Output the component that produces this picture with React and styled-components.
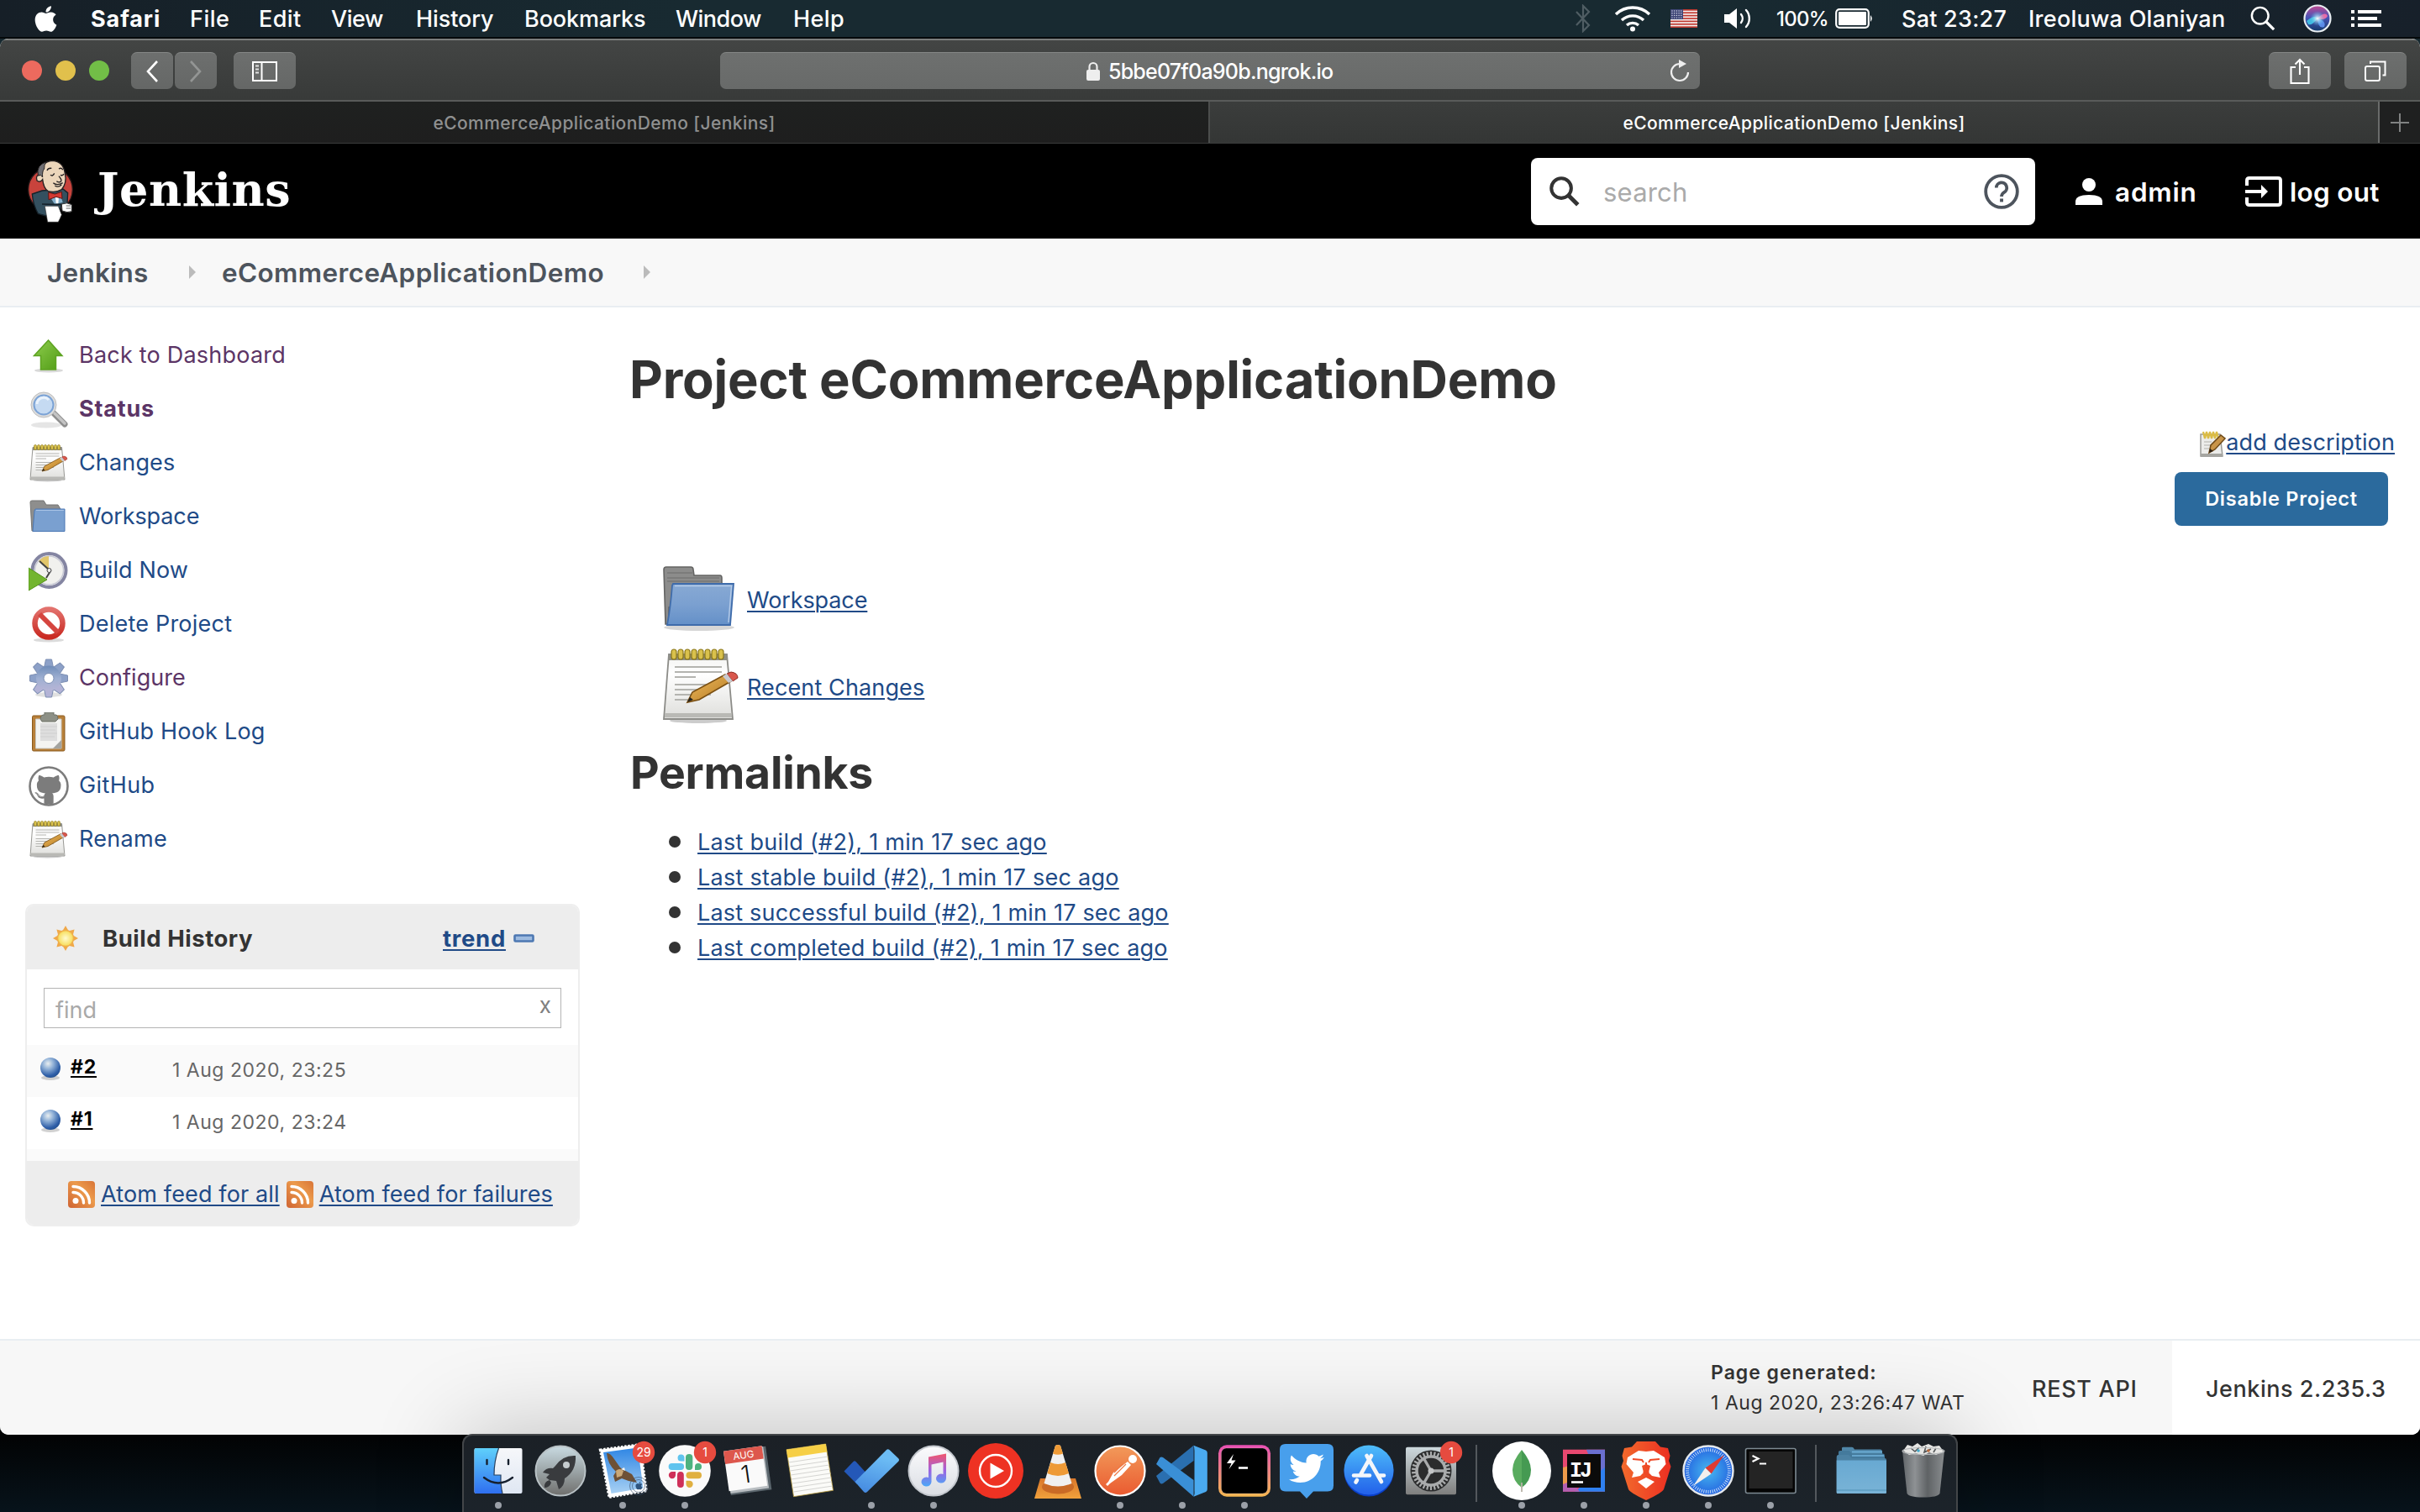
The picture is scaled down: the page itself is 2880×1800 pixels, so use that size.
import React from "react";
import styled, { createGlobalStyle, css } from "styled-components";
import { FaApple, FaTwitter, FaGithub } from "react-icons/fa";

const sans = `Inter, "Noto Sans", "Liberation Sans", sans-serif`;

const GlobalStyle = createGlobalStyle`
  *, *::before, *::after { box-sizing: border-box; }
  html, body { margin: 0; padding: 0; background: #070b0e; }
  body { font-family: ${sans}; font-size: 27px; color: #333; overflow: hidden; }
`;

/* ---------- shell ---------- */
const Desktop = styled.div`
  width: 2880px; height: 1800px; display: flex; flex-direction: column; overflow: hidden;
  background: linear-gradient(#182a31 0, #0a1216 1400px, #020304 1710px, #07131b 1800px);
`;
const MenuBar = styled.header`
  height: 46px; flex: none; display: flex; align-items: center; padding: 0 44px 0 37px; color: #fff;
  background: linear-gradient(90deg, #161f27 0, #182a31 28%, #182a31 70%, #17202a 100%);
  border-bottom: 2px solid #05090b;
`;
const MenuText = styled.span`
  flex: none; width: ${(p) => p.$w}px; font-size: ${(p) => p.$size || 27}px; font-weight: ${(p) => p.$weight || 500};
  letter-spacing: ${(p) => p.$ls || 0}px; white-space: nowrap; line-height: 44px; padding-top: 1px;
`;
const MenuIcon = styled.span`
  flex: none; width: ${(p) => p.$w}px; height: 44px; display: flex; align-items: center;
  svg { display: block; }
`;
const Push = styled.div` flex: 1; `;

const Window = styled.section`
  flex: none; height: 1662px; display: flex; flex-direction: column; background: #fff;
  border-radius: 10px; overflow: hidden;
`;
const Toolbar = styled.div`
  height: 75px; flex: none; display: flex; align-items: center; padding: 1px 16px 0 26px;
  background: linear-gradient(#434544, #383a39); border-top: 2px solid #7b7d7c; border-bottom: 2px solid #595b5a;
`;
const Light = styled.span`
  width: 24px; height: 24px; margin-right: 16px; border-radius: 50%; background: ${(p) => p.$color};
`;
const ToolButton = styled.span`
  width: ${(p) => p.$w}px; height: 44px; margin-left: ${(p) => p.$ml || 0}px; border-radius: 7px;
  display: flex; align-items: center; justify-content: center;
  background: linear-gradient(#6d6f6e, #656766); border-top: 1px solid #858786;
`;
const Address = styled.div`
  width: 1166px; height: 44px; margin-left: 505px; border-radius: 7px; display: flex; align-items: center;
  padding-left: 434px; padding-right: 12px; color: #fff; font-size: 25px; font-weight: 500;
  letter-spacing: ${(p) => p.$ls}px;
  background: linear-gradient(#6e706f, #686a69); border-top: 1px solid #858786;
  > span { flex: 1; padding: 1px 0 0 8px; white-space: nowrap; }
`;
const Tabs = styled.div` height: 50px; flex: none; display: flex; border-bottom: 1px solid #3a3b3b; `;
const Tab = styled.div`
  width: ${(p) => p.$w}px; display: flex; align-items: center; justify-content: center; padding-top: 2px;
  font-size: 21px; font-weight: 500; letter-spacing: ${(p) => p.$ls}px; white-space: nowrap;
  color: ${(p) => (p.$on ? "#fff" : "#8f9090")};
  background: ${(p) => (p.$on ? "linear-gradient(#3b3d3c,#343635)" : "linear-gradient(#1f2120,#1e1e1e)")};
  border-right: 2px solid ${(p) => (p.$on ? "#6a6c6b" : "#4c4e4d")};
`;
const NewTab = styled.div` flex: 1; background: #1f2020; display: flex; align-items: center; justify-content: center; `;

/* ---------- Jenkins header ---------- */
const Header = styled.div`
  height: 113px; flex: none; background: #000; display: flex; align-items: center; padding: 0 45px 0 32px;
`;
const Brand = styled.span`
  margin-left: 27px; margin-top: -4px; color: #fff; font-family: "DejaVu Serif", serif; font-weight: 700;
  font-size: 54px; letter-spacing: ${(p) => p.$ls}px; line-height: 80px; white-space: nowrap;
`;
const SearchBox = styled.div`
  width: 600px; height: 80px; border-radius: 8px; background: #fff; display: flex; align-items: center;
  padding: 0 19px 0 22px; color: #aaa; font-size: 31px; letter-spacing: ${(p) => p.$ls}px;
  > span { flex: 1; padding: 1px 0 0 28px; }
`;
const HeaderLink = styled.span`
  display: flex; align-items: center; width: ${(p) => p.$w}px; margin-left: ${(p) => p.$ml}px; gap: ${(p) => p.$gap}px;
  color: #fff; font-size: 31.5px; font-weight: 600; letter-spacing: ${(p) => p.$ls}px; white-space: nowrap; padding-top: 1px;
  svg { flex: none; }
`;
const Crumbs = styled.nav`
  height: 82px; flex: none; display: flex; align-items: center; padding: 0 0 0 56px; background: #f8f8f8;
  border-bottom: 2px solid #e9eef2; color: #4d545d; font-size: 31.5px; font-weight: 600;
`;
const Crumb = styled.span` width: ${(p) => p.$w}px; letter-spacing: ${(p) => p.$ls}px; white-space: nowrap; `;
const CrumbArrow = styled.span`
  width: 39px; height: 16px; display: flex;
  &::before { content: ""; border-left: 8px solid #bbb; border-top: 8px solid transparent; border-bottom: 8px solid transparent; }
`;

/* ---------- body ---------- */
const Body = styled.div` flex: 1; display: flex; min-height: 0; background: #fff; `;
const Aside = styled.aside` width: 690px; flex: none; padding: 26px 0 0 30px; `;
const Task = styled.a`
  height: 64px; display: flex; align-items: center; gap: 12px; padding-left: 4px;
  color: ${(p) => (p.$visited ? "#5c3566" : "#204a87")}; font-weight: ${(p) => (p.$bold ? 700 : 400)};
  letter-spacing: ${(p) => p.$ls}px;
  > span { padding-bottom: 4px; white-space: nowrap; }
`;
const Panel = styled.section`
  margin-top: 44px; width: 660px; height: 384px; border: 2px solid #eee; border-radius: 10px; overflow: hidden;
  display: flex; flex-direction: column; background: #fff;
`;
const PanelHead = styled.div`
  height: 76px; flex: none; background: #ededed; display: flex; align-items: center; padding: 1px 0 0 30px;
  font-size: 27.5px; font-weight: 700;
  svg { flex: none; }
  a + svg { margin-left: 9px; }
`;
const PanelTitle = styled.span`
  flex: none; width: 433px; padding-left: 28px; letter-spacing: ${(p) => p.$ls}px; white-space: nowrap;
`;
const linkStyle = css`
  color: #204a87; text-decoration: underline; text-decoration-thickness: 2px; text-underline-offset: 3px;
  text-decoration-skip-ink: auto; white-space: nowrap; letter-spacing: ${(p) => p.$ls || 0}px;
`;
const Link = styled.a` ${linkStyle} `;
const Find = styled.div`
  flex: none; height: 48px; margin: 22px 20px 20px; border: 1px solid #b4b4b4; display: flex; align-items: center;
  justify-content: space-between; padding: 4px 11px 0 13px; color: #a9a9a9; font-size: 27px;
  > i { font-style: normal; font-size: 26px; color: #808080; padding-bottom: 12px; }
`;
const Build = styled.div`
  flex: none; height: 62px; display: flex; padding: 14px 0 0 14px; background: ${(p) => (p.$alt ? "#fafafa" : "#fff")};
`;
const BuildNo = styled.a`
  width: 121px; margin-left: 10px; margin-top: -4px; color: #000; font-weight: 700; font-size: 23px; line-height: 32px;
  text-decoration: underline; text-decoration-thickness: 2px; text-underline-offset: 3px; letter-spacing: ${(p) => p.$ls}px;
`;
const BuildDate = styled.span` font-size: 23px; line-height: 32px; color: #666; letter-spacing: ${(p) => p.$ls}px; `;
const Strip = styled.div` flex: none; height: 14px; background: #fafafa; `;
const PanelFoot = styled.div`
  flex: 1; background: #ededed; display: flex; align-items: center; padding: 3px 0 0 49px;
  svg { flex: none; margin-right: 7px; }
  a + svg { margin-left: 8px; }
`;

const Main = styled.main` flex: 1; padding: 36px 30px 0 60px; display: flex; flex-direction: column; `;
const Title = styled.h1`
  margin: 0 0 0 -1px; height: 100px; line-height: 100px; font-size: 61.5px; font-weight: 700; color: #333;
  letter-spacing: ${(p) => p.$ls}px; white-space: nowrap;
`;
const Actions = styled.div` display: flex; flex-direction: column; align-items: flex-end; padding-top: 8px; `;
const Describe = styled.div` display: flex; align-items: center; height: 32px; svg { margin-top: 6px; } `;
const Button = styled.button`
  width: 254px; height: 64px; margin: 20px 8px 0 0; border: 0; border-radius: 8px; background: #2b6a9d; color: #fff; padding: 0 0 1px;
  font: 600 23.5px ${sans}; letter-spacing: ${(p) => p.$ls}px;
`;
const Shortcuts = styled.div` margin: 36px 0 0 36px; `;
const Shortcut = styled.div` height: 104px; display: flex; align-items: center; gap: 7px; `;
const SubTitle = styled.h2`
  margin: 20px 0 0 0; height: 60px; line-height: 60px; font-size: 53.5px; font-weight: 700; color: #333;
  letter-spacing: ${(p) => p.$ls}px;
`;
const Permalinks = styled.ul` list-style: none; margin: 31px 0 0 46px; padding: 0; `;
const Permalink = styled.li`
  height: 42px; display: flex; align-items: center; gap: 20px;
  &::before { content: ""; width: 14px; height: 14px; border-radius: 50%; background: #333; }
`;

const Footer = styled.footer`
  height: 114px; flex: none; display: flex; align-items: center; justify-content: flex-end; background: #f7f7f7;
  border-top: 2px solid #e9eef2; color: #333;
`;
const Generated = styled.div` width: 382px; line-height: 36px; font-size: 23px; padding-bottom: 1px; white-space: nowrap; `;
const GenLine = styled.div` font-weight: ${(p) => p.$weight}; letter-spacing: ${(p) => p.$ls}px; `;
const FootItem = styled.div`
  width: ${(p) => p.$w}px; height: 112px; display: flex; align-items: center; padding: 2px 0 0 ${(p) => p.$pl}px;
  font-weight: 500; letter-spacing: ${(p) => p.$ls}px; white-space: nowrap; background: ${(p) => (p.$white ? "#fff" : "none")};
`;

/* ---------- dock ---------- */
const DockBar = styled.div`
  position: relative; flex: none; align-self: center; margin-top: -1px; width: 1780px; height: 110px; padding: 4px 2px 0 4px;
  display: flex; background: linear-gradient(#1b2026, #1c242b); border: 2px solid #434649; border-bottom: 0;
  border-radius: 12px 12px 0 0; box-shadow: 0 0 110px rgba(0, 0, 0, 0.24);
`;
const DockItem = styled.div`
  width: 74px; display: flex; flex-direction: column; align-items: center;
  svg { display: block; overflow: visible; }
  &::after {
    content: ""; width: 8px; height: 8px; margin-top: -1px; border-radius: 50%;
    background: ${(p) => (p.$running ? "#9ba0a8" : "transparent")};
  }
`;
const DockSplit = styled.div` width: 34px; display: flex; justify-content: center; padding-top: 7px;
  &::before { content: ""; width: 2px; height: 68px; background: #53585d; } `;

/* ---------- drawings ---------- */
const Butler = () => (
  <svg width="57" height="78" viewBox="36 26 171 234">
    <circle cx="120" cy="136" r="79" fill="#c8433c" stroke="#2a1a1a" strokeWidth="4" />
    <path d="M55 152 L90 140 L165 134 L182 148 L180 188 L160 190 L150 222 L104 230 L76 222 Q58 190 55 152Z" fill="#34505f" stroke="#16222a" strokeWidth="4" />
    <path d="M120 165 L158 160 L164 182 L135 188Z" fill="#84b0cc" />
    <path d="M138 163 L150 163 L148 186 L140 186Z" fill="#fff" />
    <path d="M92 100 Q84 112 72 104 Q66 84 82 84 Q84 36 128 33 Q166 36 172 78 Q180 112 160 136 Q140 148 112 142 Q96 134 92 100Z" fill="#ecd6bb" stroke="#231f20" strokeWidth="4" />
    <path d="M76 86 Q68 48 106 37 Q96 48 98 62 Q90 70 92 92 Q86 80 76 86Z" fill="#6f6e72" stroke="#231f20" strokeWidth="3" />
    <path d="M108 68 Q112 58 124 60 M150 62 Q160 56 164 66 M120 84 Q128 90 134 78 M156 84 Q164 88 168 80 M150 88 Q164 104 156 108 Q150 112 142 106 M130 112 Q144 124 164 112 M136 122 Q148 130 160 118" fill="none" stroke="#231f20" strokeWidth="4" />
    <path d="M113 146 L136 152 L160 144 L162 168 L140 162 L114 172Z" fill="#d43a32" stroke="#5c1512" strokeWidth="3" />
    <path d="M90 188 L160 190" stroke="#16222a" strokeWidth="5" />
    <path d="M100 195 L148 195 L160 226 L154 240 L148 252 L110 252Z" fill="#fff" stroke="#333" strokeWidth="2" />
    <path d="M160 188 Q180 180 196 190 L196 214 Q180 220 162 212Z" fill="#fff" stroke="#333" strokeWidth="3" />
    <path d="M176 194 h16 M176 203 h16" stroke="#666" strokeWidth="3" />
  </svg>
);

const Notepad = ({ size }) => (
  <svg width={size} height={size} viewBox="0 0 96 96">
    <defs>
      <linearGradient id="np" x1="0" y1="0" x2="0" y2="1"><stop offset="0" stopColor="#f2f2f0" /><stop offset=".3" stopColor="#fff" /><stop offset="1" stopColor="#dededb" /></linearGradient>
      <linearGradient id="pc" x1="0" y1="0" x2="1" y2="1"><stop offset="0" stopColor="#f0bd62" /><stop offset="1" stopColor="#b4781f" /></linearGradient>
    </defs>
    <ellipse cx="45" cy="88" rx="34" ry="3" fill="#000" opacity=".2" />
    <path d="M10 9 H79 L86 86 H4Z" fill="url(#np)" stroke="#8c8c88" strokeWidth="1.800" />
    <path d="M5 79 H85 V84 H5Z" fill="#b9b9b5" />
    <path d="M10 9 H79 L80 16 H10Z" fill="#8f8f86" />
    {[0, 1, 2, 3, 4, 5, 6, 7].map((i) => (
      <rect key={i} x={13 + i * 8} y="3" width="6" height="12" rx="3" fill="#d9c14c" stroke="#8b7718" strokeWidth="1.200" />
    ))}
    <path d="M17 24 H73 M17 30 H73 M17 36 H42 M17 45 H73 M17 51 H60 M17 57 H60 M17 63 H40" stroke="#b4b4b0" strokeWidth="2" />
    <path d="M32 66 L38 54 L77 33 L84 41 L46 63Z" fill="url(#pc)" stroke="#7a4f12" strokeWidth="1.600" />
    <path d="M79 32 L84 30 Q92 31 92 37 L86 41Z" fill="#d9574c" stroke="#8d2a20" strokeWidth="1" />
    <path d="M74 35 L79 32 L86 41 L81 43Z" fill="#c9c9cf" />
    <path d="M32 66 L35 60 L39 63Z" fill="#222" />
  </svg>
);
const Folder = ({ size }) => (
  <svg width={size} height={size} viewBox="0 0 96 96">
    <defs><linearGradient id="fb" x1="0" y1="0" x2="0" y2="1"><stop offset="0" stopColor="#87a9d4" /><stop offset=".5" stopColor="#7ba0d0" /><stop offset="1" stopColor="#6490c8" /></linearGradient></defs>
    <ellipse cx="46" cy="81" rx="42" ry="4" fill="#000" opacity=".16" />
    <path d="M4 12 Q4 9 7 9 H36 Q39 9 39 12 L40 19 H71 Q73 19 73 22 V57 H10 V77 H6Z" fill="#8c8c8b" stroke="#646463" strokeWidth="1.600" />
    <path d="M8 16 H38 M8 22 H70 M8 26 H70" stroke="#777" strokeWidth="1.500" />
    <path d="M15 29 H87 L83 78 H8 Q12 57 14 31Z" fill="url(#fb)" stroke="#3f6cab" strokeWidth="1.800" />
    <path d="M17 31.500 H84.500 L81 75" fill="none" stroke="#b5cbe8" strokeWidth="1.400" />
  </svg>
);
const SmallFolder = () => (
  <svg width="48" height="48" viewBox="0 0 48 48">
    <path d="M2 6 Q2 4 4 4 H18 L21 9 H35 L38 14 V30 H7 V40 H4Z" fill="#8e8e8d" stroke="#757574" />
    <path d="M8 14 H43 V40.500 H5 L7 16Z" fill="#7aa0d0" stroke="#4a77b4" />
    <path d="M9 15.500 H42" stroke="#aac4e6" />
  </svg>
);
const UpArrow = () => (
  <svg width="48" height="48" viewBox="0 0 48 48">
    <defs><linearGradient id="ua" x1="0" y1="0" x2="1" y2="1"><stop offset="0" stopColor="#8fce4e" /><stop offset="1" stopColor="#4f9a14" /></linearGradient></defs>
    <ellipse cx="24" cy="41" rx="17" ry="2.500" fill="#000" opacity=".15" />
    <path d="M23.500 5 L40 23.500 H32.500 V40 H14.500 V23.500 H6.500Z" fill="url(#ua)" stroke="#5da321" strokeWidth="1.500" />
  </svg>
);
const Magnify = () => (
  <svg width="48" height="48" viewBox="0 0 48 48">
    <ellipse cx="21" cy="42" rx="18" ry="3.500" fill="#000" opacity=".1" />
    <path d="M30 28 L43 41" stroke="#8e8e8e" strokeWidth="7" strokeLinecap="round" />
    <path d="M31 28 L43 40" stroke="#c4c4c4" strokeWidth="3.500" strokeLinecap="round" />
    <circle cx="18" cy="18" r="15" fill="#dcdcdc" stroke="#bdbdbd" />
    <circle cx="18" cy="18" r="11.500" fill="#c5daf2" stroke="#7ba3d6" strokeWidth="2" />
    <path d="M10 17 A8 8 0 0 1 24 12" stroke="#e9f2fc" strokeWidth="3" fill="none" />
  </svg>
);
const ClockPlay = () => (
  <svg width="48" height="48" viewBox="0 0 48 48">
    <circle cx="24.500" cy="23" r="20" fill="#f1f1ee" stroke="#8485a2" strokeWidth="4" />
    <circle cx="24.500" cy="23" r="17" fill="none" stroke="#c9cad6" strokeWidth="1.500" />
    <path d="M24 23 L12 12 Q17 6 24 6Z" fill="#e2c66a" />
    <path d="M13 12 L26 24 L21 32" stroke="#444" strokeWidth="2" fill="none" />
    <circle cx="24.500" cy="23" r="2.500" fill="#eee" stroke="#444" />
    <path d="M0 20 L22 34 L0 47Z" fill="#73b52f" stroke="#55941a" />
  </svg>
);
const NoEntry = () => (
  <svg width="48" height="48" viewBox="0 0 48 48">
    <defs><linearGradient id="ne" x1="0" y1="0" x2="0" y2="1"><stop offset="0" stopColor="#e2716c" /><stop offset="1" stopColor="#c92a22" /></linearGradient></defs>
    <ellipse cx="24" cy="42" rx="18" ry="2.500" fill="#000" opacity=".14" />
    <circle cx="24" cy="22" r="16.500" fill="#fff" stroke="url(#ne)" strokeWidth="6.500" />
    <path d="M13 11 L35 33" stroke="#d5453f" strokeWidth="6" />
  </svg>
);
const Gear = () => (
  <svg width="48" height="48" viewBox="0 0 48 48">
    <defs><linearGradient id="ge" x1="0" y1="0" x2="0" y2="1"><stop offset="0" stopColor="#6f8cb8" /><stop offset=".5" stopColor="#9fb0d2" /><stop offset="1" stopColor="#b7b5d6" /></linearGradient></defs>
    <ellipse cx="24" cy="43" rx="16" ry="3" fill="#000" opacity=".12" />
    {[0, 45, 90, 135, 180, 225, 270, 315].map((a) => (
      <path key={a} d="M18 13 L20.500 1 H27.500 L30 13Z" fill={a > 90 && a < 270 ? "#b3b3d6" : "#8da1c8"} stroke="#7d8fb3" transform={`rotate(${a} 24 23.500)`} />
    ))}
    <circle cx="24" cy="23.500" r="15" fill="url(#ge)" />
    <circle cx="24" cy="23.500" r="6" fill="#fff" stroke="#7d8fb3" />
  </svg>
);
const Clipboard = () => (
  <svg width="48" height="48" viewBox="0 0 48 48">
    <rect x="4.500" y="4" width="38.500" height="42" rx="1.500" fill="#b8803a" stroke="#8a5a1e" />
    <path d="M8.500 8 H39 V43 H8.500Z" fill="#f4f4f2" stroke="#c8c8c4" />
    <rect x="14" y="13" width="20" height="21" fill="#dedede" />
    <path d="M14 17 H34 M14 21 H32 M14 25 H34 M14 29 H31" stroke="#cfcfcf" />
    <path d="M39 33 L29 43 H39Z" fill="#a3a39f" />
    <path d="M19 0 H30 V3 H33 Q35 4 35 8 L32 11 H16 L14 8 Q14 4 17 3 H19Z" fill="#8d9086" stroke="#6d7067" />
  </svg>
);
const Octocat = () => (
  <svg width="48" height="48" viewBox="0 0 48 48">
    <circle cx="24" cy="24" r="21.500" fill="#7c7c7c" />
    <FaGithub x="1" y="1" size={46} color="#fff" />
    <circle cx="24" cy="24" r="22.500" fill="none" stroke="#7c7c7c" strokeWidth="2.600" />
  </svg>
);
const Sun = () => (
  <svg width="32" height="32" viewBox="0 0 32 32">
    <defs><radialGradient id="su"><stop offset="0" stopColor="#fffbd0" /><stop offset="1" stopColor="#f7dc55" /></radialGradient></defs>
    {[0, 45, 90, 135, 180, 225, 270, 315].map((a) => (
      <path key={a} d="M12 8 L16 1 L20 8Z" fill="#f0a848" transform={`rotate(${a} 16 16)`} />
    ))}
    <circle cx="16" cy="16" r="9.500" fill="url(#su)" stroke="#efb04c" strokeWidth="1.500" />
  </svg>
);
const Collapse = () => (
  <svg width="26" height="12" viewBox="0 0 26 12"><rect x="1.500" y="2.500" width="22" height="7" rx="1" fill="#9dbbe0" stroke="#4d78b2" strokeWidth="2.600" /></svg>
);
const Ball = () => (
  <svg width="28" height="30" viewBox="0 0 28 30">
    <defs><radialGradient id="ba" cx=".38" cy=".3" r=".75"><stop offset="0" stopColor="#e9eef0" /><stop offset=".35" stopColor="#93b3d8" /><stop offset=".8" stopColor="#2f5fa8" /><stop offset="1" stopColor="#24508f" /></radialGradient></defs>
    <ellipse cx="14" cy="25" rx="11" ry="3" fill="#000" opacity=".18" /><circle cx="14" cy="13" r="12" fill="url(#ba)" />
  </svg>
);
const Rss = () => (
  <svg width="32" height="32" viewBox="0 0 32 32">
    <defs><linearGradient id="rs" x1="0" y1="1" x2="1" y2="0"><stop offset="0" stopColor="#cf6433" /><stop offset=".6" stopColor="#ec9a4b" /><stop offset="1" stopColor="#d87437" /></linearGradient></defs>
    <rect width="32" height="32" rx="4" fill="url(#rs)" />
    <circle cx="9" cy="23.500" r="3.500" fill="#fff" />
    <path d="M6 13.500 A12.500 12.500 0 0 1 18.500 26 M6 6.500 A19.500 19.500 0 0 1 25.500 26" fill="none" stroke="#fff" strokeWidth="3.400" strokeLinecap="round" />
  </svg>
);
const NoteEdit = () => (
  <svg width="32" height="32" viewBox="0 0 32 32">
    <path d="M2 4 H25 L28 30 H2Z" fill="#ececea" stroke="#9b9b97" strokeWidth="1.500" />
    <path d="M2 27 H28 V31 H2Z" fill="#a5a5a1" />
    <path d="M5 1 L7 9 L9 1 L11 9 L13 1 L15 9 L17 1 L19 9 L21 1 L23 9" stroke="#dbbc45" strokeWidth="2.200" fill="none" />
    <path d="M6 13 H15 M6 17 H14 M6 21 H12" stroke="#c4c4c0" strokeWidth="1.500" />
    <path d="M12 26 L14 17 L26 5 L31 9 L19 22Z" fill="#c89448" stroke="#6f4a17" strokeWidth="1.500" /><path d="M12 26 L13 21 L17 24Z" fill="#2c2116" />
  </svg>
);

const s = { fill: "none", stroke: "#fff", strokeLinecap: "round" };
const Bluetooth = () => (
  <svg width="20" height="34" viewBox="0 0 20 34"><path d="M2 9 L17 25 L10 32 V2 L17 9 L2 25" fill="none" stroke="#4f5d63" strokeWidth="2.200" /></svg>
);
const Wifi = () => (
  <svg width="44" height="32" viewBox="0 0 44 32">
    <path d="M2 11 A29 29 0 0 1 42 11 M9 18 A19 19 0 0 1 35 18 M15 24 A10.500 10.500 0 0 1 29 24" {...s} strokeLinecap="butt" strokeWidth="3.400" /><circle cx="22" cy="28.500" r="3" fill="#fff" />
  </svg>
);
const Flag = () => (
  <svg width="32" height="22" viewBox="0 0 32 22">
    <rect width="32" height="22" fill="#f4f0f0" />
    {[0, 1, 2, 3, 4, 5, 6].map((i) => <rect key={i} y={i * 3.385} width="32" height="1.700" fill="#c0392f" />)}
    <rect width="15" height="12" fill="#3f4677" />
    {[0, 1, 2, 3].map((r) => [0, 1, 2, 3, 4].map((c) => <circle key={`${r}${c}`} cx={2 + c * 2.7} cy={2 + r * 2.7} r=".7" fill="#dfe2ee" />))}
  </svg>
);
const Speaker = () => (
  <svg width="34" height="26" viewBox="0 0 34 26">
    <path d="M0 8 H6 L15 1 V25 L6 18 H0Z" fill="#fff" /><path d="M20 8 A8 8 0 0 1 20 18 M26 3 A15 15 0 0 1 26 23" {...s} strokeWidth="2.400" />
  </svg>
);
const Battery = () => (
  <svg width="46" height="24" viewBox="0 0 46 24">
    <rect x="1.200" y="1.200" width="38.600" height="21.600" rx="4" fill="none" stroke="#fff" strokeWidth="2.200" /><rect x="4" y="4" width="33" height="16" rx="1" fill="#fff" /><path d="M42 8 Q45.500 12 42 16Z" fill="#fff" />
  </svg>
);
const Lens = ({ size, w, color }) => (
  <svg width={size} height={size} viewBox="0 0 32 32"><circle cx="12.500" cy="12.500" r="10.500" fill="none" stroke={color} strokeWidth={w} /><path d="M20 20 L30 30" stroke={color} strokeWidth={w + 0.8} /></svg>
);
const Siri = () => (
  <svg width="34" height="34" viewBox="0 0 34 34">
    <defs>
      <linearGradient id="si" x1="0" y1="0" x2="0" y2="1"><stop offset="0" stopColor="#c2478f" /><stop offset=".45" stopColor="#4a55b8" /><stop offset="1" stopColor="#123a6b" /></linearGradient>
      <radialGradient id="sg"><stop offset="0" stopColor="#fff" /><stop offset="1" stopColor="#45c6e8" stopOpacity="0" /></radialGradient>
    </defs>
    <circle cx="17" cy="17" r="15.500" fill="url(#si)" stroke="#e8eef2" strokeWidth="2.200" />
    <path d="M4 20 Q14 12 17 17 Q10 26 6 24Z" fill="#3fb9e0" /><path d="M17 17 Q26 8 29 14 Q26 20 17 17Z" fill="#e86aa8" /><path d="M17 17 Q28 20 25 27 Q18 30 17 17Z" fill="#5b8be8" />
    <circle cx="17" cy="17" r="9" fill="url(#sg)" />
  </svg>
);
const ListIcon = () => (
  <svg width="36" height="20" viewBox="0 0 36 20"><path d="M0 2 H4 M8 2 H36 M0 10 H4 M8 10 H31 M0 18 H4 M8 18 H36" stroke="#fff" strokeWidth="3.800" /></svg>
);
const Chevron = ({ flip }) => (
  <svg width="14" height="26" viewBox="0 0 14 26"><path d={flip ? "M1 1 L12 13 L1 25" : "M13 1 L2 13 L13 25"} fill="none" stroke={flip ? "#939594" : "#fff"} strokeWidth="2.600" /></svg>
);
const SidebarIcon = () => (
  <svg width="30" height="24" viewBox="0 0 30 24"><rect x="1" y="1" width="28" height="22" fill="none" stroke="#fff" strokeWidth="2" /><path d="M11.500 1 V23" stroke="#fff" strokeWidth="2" /><path d="M4 5.500 H8 M4 9.500 H8 M4 13.500 H8" stroke="#fff" strokeWidth="1.800" opacity=".8" /></svg>
);
const Lock = () => (
  <svg width="20" height="24" viewBox="0 0 20 24"><rect x="2" y="10" width="16" height="13" rx="2" fill="#eee" /><path d="M5.500 11 V6.500 A4.500 4.500 0 0 1 14.500 6.500 V11" fill="none" stroke="#eee" strokeWidth="2.200" /></svg>
);
const Reload = () => (
  <svg width="24" height="28" viewBox="0 0 24 28"><path d="M12 5 A10 10 0 1 0 22 15" fill="none" stroke="#eee" strokeWidth="2.200" /><path d="M11 0 L20 5 L11 10Z" fill="#eee" /></svg>
);
const Share = () => (
  <svg width="26" height="32" viewBox="0 0 26 32"><path d="M8 11 H2.500 V30 H23.500 V11 H18 M13 20 V2 M7.500 7.500 L13 2 L18.500 7.500" fill="none" stroke="#fff" strokeWidth="2.100" /></svg>
);
const TabsIcon = () => (
  <svg width="28" height="26" viewBox="0 0 28 26"><rect x="2" y="7" width="17" height="17" rx="2" fill="none" stroke="#fff" strokeWidth="2" /><path d="M8 4 V1.500 H25.500 V17.500 H22.500" fill="none" stroke="#fff" strokeWidth="2" /></svg>
);
const Plus = () => <svg width="22" height="22" viewBox="0 0 22 22"><path d="M11 0 V22 M0 11 H22" stroke="#808282" strokeWidth="2" /></svg>;
const Help = () => (
  <svg width="42" height="42" viewBox="0 0 42 42"><circle cx="21" cy="21" r="18.800" fill="none" stroke="#4d545d" strokeWidth="3.800" /><path d="M14.800 16.500 A6.200 6.200 0 1 1 24 22 Q21 24 21 27" fill="none" stroke="#4d545d" strokeWidth="3.800" /><rect x="19.100" y="29.500" width="3.900" height="3.900" fill="#4d545d" /></svg>
);
const Person = () => (
  <svg width="32" height="32" viewBox="0 0 32 32"><circle cx="16" cy="8" r="8" fill="#fff" /><path d="M0 32 V28 Q0 20 16 20 Q32 20 32 28 V32Z" fill="#fff" /></svg>
);
const Logout = () => (
  <svg width="44" height="36" viewBox="0 0 44 36"><path d="M2 11 V5 Q2 2 5 2 H39 Q42 2 42 5 V31 Q42 34 39 34 H5 Q2 34 2 31 V25" fill="none" stroke="#fff" strokeWidth="4" /><path d="M0 18 H22" stroke="#fff" strokeWidth="4" /><path d="M19 10 L27 18 L19 26Z" fill="#fff" /></svg>
);

/* ---------- dock drawings (70 x 76 box, centre 35,38) ---------- */
const Badge = ({ cx, cy, children }) => (
  <g>
    <circle cx={cx} cy={cy} r="13.200" fill="#e64b3f" />
    <text x={cx} y={cy + 5} textAnchor="middle" fontFamily="Inter, sans-serif" fontSize="14" fill="#fff">{children}</text>
  </g>
);
const LG = ({ id, a, b, x2 = 0, y2 = 1 }) => (
  <linearGradient id={id} x1="0" y1="0" x2={x2} y2={y2}><stop offset="0" stopColor={a} /><stop offset="1" stopColor={b} /></linearGradient>
);
const ray = (n, r1, r2, w, color) =>
  Array.from({ length: n }, (_, i) => (
    <path key={i} d={`M35 ${38 - r1} V${38 - r2}`} stroke={color} strokeWidth={w} transform={`rotate(${(i * 360) / n} 35 38)`} />
  ));

const dock = {
  finder: (
    <>
      <defs><LG id="d1" a="#5fd0fb" b="#2f6ff0" /><LG id="d1b" a="#f6f7fa" b="#dfe7f3" /></defs>
      <rect x="6.500" y="11" width="57" height="54" rx="2" fill="url(#d1b)" />
      <path d="M8.500 11 H35.500 Q30 26 30 43 H38 Q37.500 55 40 65 H8.500 Q6.500 65 6.500 63 V13 Q6.500 11 8.500 11Z" fill="url(#d1)" />
      <path d="M35.500 11 Q30 26 30 43 H38 Q37.500 55 40 65" fill="none" stroke="#27405f" strokeWidth="1.200" />
      <path d="M21.500 25 V30 M47 25 V30 M18 46 Q35 59 52 46" fill="none" stroke="#16202e" strokeWidth="2.400" strokeLinecap="round" />
    </>
  ),
  launchpad: (
    <>
      <defs><LG id="d2" a="#c9dbe2" b="#6f6f6d" /></defs>
      <circle cx="35" cy="38" r="29.500" fill="url(#d2)" stroke="#b9c2c6" strokeWidth="2" />
      <path d="M53 20 Q38 19 29 32 L26 35 Q18 34 14 40 L22 42 L18 46 L22 49 L30 50 L33 60 Q40 56 40 47 Q54 38 53 20Z M22 49 Q15 51 16 58 Q22 58 24 52Z" fill="#393b3e" />
      <circle cx="42" cy="31" r="4" fill="#c5cbce" />
    </>
  ),
  mail: (
    <>
      <defs><LG id="d3" a="#2f86e4" b="#a8d1f4" /></defs>
      <path d="M8 12.700 L56 6.300 L63.500 62 L18.700 69.700Z" fill="#fff" stroke="#fff" strokeWidth="2.500" strokeDasharray="2.500 1.700" />
      <path d="M12 16 L53 10.500 L59.500 58.500 L21.500 65Z" fill="url(#d3)" />
      <path d="M16 17 Q20 16 25 24 L32 34 Q38 38 46 42 L52 52 L42 50 L34 47 L26 51 L24 44 L27 39 Q17 30 16 17Z" fill="#6e5136" />
      <path d="M27 38 Q31 34 36 38 L34 44 L28 46Z" fill="#c9a878" /><path d="M33 36 L37 34 L38 38Z" fill="#f4f4f0" />
      <circle cx="54" cy="56" r="10.500" fill="none" stroke="#39506b" opacity=".6" /><circle cx="54" cy="56" r="7.500" fill="none" stroke="#39506b" opacity=".6" />
      <FaApple x="49" y="50" size={11} color="#2f557f" />
      <Badge cx={60} cy={16}>29</Badge>
    </>
  ),
  slack: (
    <>
      <circle cx="35" cy="38" r="30.800" fill="#fafafa" />
      <g fill="#60c4ee"><path d="M34.500 26.500 H30.500 A4 4 0 1 1 34.500 22Z" /><rect x="15.600" y="29" width="18.500" height="8" rx="4" /></g>
      <g fill="#4db27f"><rect x="36" y="18" width="8.300" height="19" rx="4.100" /><path d="M47 37 V33 A4 4 0 1 1 51 37Z" /></g>
      <g fill="#e0b040"><rect x="36.500" y="39.200" width="18.500" height="8" rx="4" /><path d="M36.500 49.700 H40.500 A4.100 4.100 0 1 1 36.500 53.800Z" /></g>
      <g fill="#cf3059"><rect x="26" y="39" width="7.800" height="19" rx="3.900" /><path d="M24 39 V43 A4.100 4.100 0 1 1 20 39Z" /></g>
      <Badge cx={59} cy={16}>1</Badge>
    </>
  ),
  calendar: (
    <g transform="rotate(-8 35 38)">
      <rect x="12" y="12" width="49" height="52" fill="#5b666d" /><rect x="12" y="12" width="46" height="50" fill="#b9bec2" />
      <rect x="10.500" y="11" width="46" height="48" fill="#fafafa" /><rect x="10.500" y="11" width="46" height="15.500" fill="#dd574d" />
      <text x="33.500" y="23" textAnchor="middle" fontFamily="Inter, sans-serif" fontSize="11.500" fill="#fff">AUG</text>
      <text x="33" y="52" textAnchor="middle" fontFamily="Inter, sans-serif" fontSize="29" fontWeight="300" fill="#111">1</text>
    </g>
  ),
  notes: (
    <>
      <path d="M8 12.700 L54.700 6 L63.500 61.300 L16.500 68.700Z" fill="#fbfbf8" stroke="#b99a3a" strokeWidth=".8" />
      <path d="M8 12.700 L54.700 6 L56.300 15.500 L9.500 22.500Z" fill="#f6cf46" />
      {[0, 1, 2, 3, 4, 5, 6, 7].map((i) => <path key={i} d={`M${10.5 + i * 0.85} ${28 + i * 5} L${57.2 + i * 0.8} ${21 + i * 5}`} stroke="#d5d5d2" />)}
    </>
  ),
  todo: (
    <>
      <defs><LG id="d7" a="#6cbcf4" b="#3f82dd" x2={-0.3} /></defs>
      <path d="M2.500 38.500 L13.500 27 Q15 25.500 16.500 27 L32 44 L18 54Z" fill="#2458b8" />
      <path d="M53 13 Q54.500 11.500 56.500 13 L67 23 Q69 25 67 27 L30 63 Q28 65 26 63 L15.500 51Z" fill="url(#d7)" />
    </>
  ),
  itunes: (
    <>
      <defs><LG id="d8" a="#fbfbfd" b="#dadde3" /><linearGradient id="d8n" x1="0" y1="0" x2="0" y2="1"><stop offset="0" stopColor="#f2576c" /><stop offset=".5" stopColor="#a060e0" /><stop offset="1" stopColor="#4aa8f8" /></linearGradient></defs>
      <circle cx="35" cy="38" r="29.500" fill="url(#d8)" stroke="#c3c7cd" strokeWidth="2" />
      <path d="M29 21.500 L50 17.500 V47 A6 5.500 0 1 1 46.500 42 V27.500 L32.500 30.500 V51 A6 5.500 0 1 1 29 46Z" fill="url(#d8n)" />
    </>
  ),
  ytmusic: (
    <>
      <circle cx="35" cy="38" r="33" fill="#ee3223" /><circle cx="35" cy="38" r="19" fill="none" stroke="#fff" strokeWidth="2.400" /><path d="M28.500 28.500 L45 38 L28.500 47.500Z" fill="#fff" />
    </>
  ),
  vlc: (
    <>
      <defs><LG id="d10" a="#d9772b" b="#f0a13c" /></defs>
      <path d="M14 47 H56 L63 71 H7Z" fill="url(#d10)" /><ellipse cx="35" cy="57" rx="19" ry="8.500" fill="#c96a26" />
      <path d="M32 8 Q35 6 38 8 L51.500 53 Q35 60 18.500 53Z" fill="#f0f0f0" />
      <path d="M32 8 Q35 6 38 8 L41 17.500 Q35 20 29 17.500Z M26.200 28 Q35 32 44 28 L48 41 Q35 47 22.300 41Z" fill="#ee9a36" />
    </>
  ),
  postman: (
    <>
      <defs><LG id="d11" a="#f29a5a" b="#ea5a30" /></defs>
      <circle cx="35" cy="38" r="29.500" fill="url(#d11)" stroke="#fff" strokeWidth="2.200" />
      <circle cx="50" cy="24" r="5" fill="#fff" /><path d="M44 27 L48 31 L37 43 L23 53 L20 56 L18 54 L21 51 L27 40Z" fill="#fff" /><path d="M42 30 L28 44 M38 30 L28 40" stroke="#ee7744" strokeWidth="1.200" />
    </>
  ),
  vscode: (
    <>
      <path d="M4 44 L8.500 52.500 Q10 54 12 53 L48.500 26 V7.700Z" fill="#2a6fb0" />
      <path d="M4 30 L8.500 22 Q10 21 12 22 L48.500 49 V68.700 Z" fill="#3a8fd6" />
      <path d="M48.500 7.700 L63 13.500 Q64.800 14.500 64.800 16.500 V60 Q64.800 62 63 63 L48.500 68.700 Q50 66 49.500 62 V14 Q49.500 10 48.500 7.700Z" fill="#4aaaf0" />
    </>
  ),
  hyper: (
    <>
      <defs><LG id="d13" a="#e84fb4" b="#f4b750" /></defs>
      <rect x="4" y="7.300" width="62" height="61.400" rx="10" fill="url(#d13)" /><rect x="7.500" y="11" width="55" height="54" rx="6" fill="#000" stroke="#fff3" />
      <path d="M22 18 L14 29 H19.500 L16.500 36 L24.500 25.500 H19.500Z" fill="#fff" /><path d="M28 34.500 H39" stroke="#fff" strokeWidth="2.600" />
    </>
  ),
  twitter: (
    <>
      <path d="M10 6 H60 Q67 6 67 13 V55.500 Q67 62.500 60 62.500 H43 L35 71 L27 62.500 H10 Q3 62.500 3 55.500 V13 Q3 6 10 6Z" fill="#489fec" />
      <FaTwitter x="14" y="14" size={42} color="#fff" />
    </>
  ),
  appstore: (
    <>
      <defs><LG id="d15" a="#4ebdfa" b="#2260ea" /></defs>
      <circle cx="35" cy="39" r="29.500" fill="#0a3fc8" /><circle cx="35" cy="37" r="29.500" fill="url(#d15)" />
      <path d="M32.500 20 L50 51 M38 20 L25.500 42 M21 49 L19.500 51.500 M17 43.500 H36 M46 43.500 H53" stroke="#f4f6fa" strokeWidth="4.600" strokeLinecap="round" />
    </>
  ),
  settings: (
    <>
      <defs><LG id="d16" a="#cdd9de" b="#7f7f7e" /></defs>
      <rect x="5" y="9.700" width="60" height="56.500" rx="2" fill="url(#d16)" />
      <circle cx="35" cy="38" r="24.500" fill="#2b2c2d" />
      {ray(30, 23, 18, 2.2, "#a9abac")}
      <circle cx="35" cy="38" r="17" fill="none" stroke="#a9abac" strokeWidth="3.500" />
      <path d="M35 38 L26 22.500 M35 38 L52 38 M35 38 L26 53.500" stroke="#a9abac" strokeWidth="3.400" /><circle cx="35" cy="38" r="3.500" fill="#c3c5c6" />
      <Badge cx={59} cy={16}>1</Badge>
    </>
  ),
  mongo: (
    <>
      <circle cx="35" cy="38" r="35" fill="#fff" />
      <path d="M35 13 Q24 26 24 37 Q24 50 35 58Z" fill="#58ab5e" /><path d="M35 13 Q46 26 46 37 Q46 50 35 58Z" fill="#459a52" /><path d="M35 52 V63" stroke="#b7b2a6" strokeWidth="1.800" />
    </>
  ),
  intellij: (
    <>
      <rect x="10" y="12.700" width="50" height="50" fill="#e8486f" />
      <path d="M38 12.700 H60 V40 H48Z" fill="#6a6fd0" /><path d="M60 34 V62.700 H24 L40 50Z" fill="#2f80f0" /><path d="M10 34 L18 32 V50 L10 56Z" fill="#ee9a4a" /><path d="M10 54 L20 50 L30 62.700 H10Z" fill="#b45fb0" />
      <rect x="15" y="18" width="40" height="40" fill="#0b0b0b" />
      <text x="18" y="45" fontFamily='"Liberation Mono", monospace' fontWeight="700" fontSize="25" letterSpacing="-3" fill="#fff">IJ</text>
      <path d="M20 51.500 H34" stroke="#fff" strokeWidth="2.600" />
    </>
  ),
  brave: (
    <>
      <defs><LG id="d19" a="#f26a2c" b="#ec2f22" x2={1} y2={0} /></defs>
      <path d="M24 3 H46 L52 9.500 L61 11 L63.500 20 L62 26 L64.500 33 L56 60 Q54 64 35 73 Q16 64 14 60 L5.500 33 L8 26 L6.500 20 L9 11 L18 9.500Z" fill="url(#d19)" />
      <path d="M35 15 L44 14 L57 22 L58.500 30 L50 40 L52 46 L42 44 L38 40 L40 32 L35 30 L30 32 L32 40 L28 44 L18 46 L20 40 L11.500 30 L13 22 L26 14Z M35 46 L45 51 L35 59 L25 51Z" fill="#fff" />
      <path d="M19 24 L30 25 L32 28 M51 24 L40 25 L38 28 M35 28 V40" stroke="#ee4a28" strokeWidth="2" fill="none" /><path d="M31 39 L39 39 L35 44Z" fill="#ee4a28" />
    </>
  ),
  safari: (
    <>
      <defs><radialGradient id="d20"><stop offset="0" stopColor="#46b8f0" /><stop offset="1" stopColor="#2464e0" /></radialGradient></defs>
      <circle cx="35" cy="38" r="29.500" fill="url(#d20)" stroke="#e4e8ec" strokeWidth="2.400" />
      {ray(60, 27, 23, 0.9, "#cfe2fa")}
      <path d="M54 19 L31.500 34.500 L38.500 41.500Z" fill="#df3a32" /><path d="M17 56 L31.500 34.500 L38.500 41.500Z" fill="#f1efed" />
    </>
  ),
  terminal: (
    <>
      <rect x="5.500" y="11.500" width="59.500" height="53" rx="2" fill="#050505" stroke="#7d8a92" strokeWidth="1.600" /><rect x="9.500" y="15" width="52" height="44" fill="#242424" />
      <path d="M13.500 20 L20.500 23.500 L13.500 27" fill="none" stroke="#fff" strokeWidth="2.200" /><path d="M22 29.500 H30" stroke="#fff" strokeWidth="2" />
    </>
  ),
  documents: (
    <>
      <defs><LG id="d22" a="#68a9d2" b="#79b3d6" /></defs>
      <path d="M12 25 V11 Q12 9.700 13.500 9.700 H24 Q26 9.700 27 12.500 H58 Q60 12.500 60 15 V25Z" fill="#4f86a8" /><path d="M8 30 V15.500 Q8 14 10 14 H21 L24 17.500 H61 Q63 17.500 63 20 V30Z" fill="#447a9c" />
      <path d="M24 15.500 H60 M24 20 H62" stroke="#71b4dc" strokeWidth="1.600" />
      <path d="M5.700 22 Q5.700 19 8 19 H20 L24 23 H63 Q65 23 65 25 V63.500 Q65 65 63.500 65 H7 Q5.700 65 5.700 63.500Z" fill="#4c82a4" />
      <path d="M5.700 25.500 H65 V63.500 Q65 65 63.500 65 H7 Q5.700 65 5.700 63.500Z" fill="url(#d22)" /><path d="M6 61 H65" stroke="#5d9cc0" strokeWidth="1.500" />
    </>
  ),
  trash: (
    <>
      <defs><linearGradient id="d23" x1="0" y1="0" x2="1" y2="0"><stop offset="0" stopColor="#6e7275" /><stop offset=".3" stopColor="#a2a5a7" /><stop offset=".6" stopColor="#6b6e70" /><stop offset="1" stopColor="#9da0a2" /></linearGradient></defs>
      <path d="M10 14 H60 L54.500 65 Q52 69.500 35 69.500 Q18 69.500 15.500 65Z" fill="url(#d23)" opacity=".85" />
      <path d="M11 14 L16 7 L22 9 L28 5 L33 9 L41 6 L47 9 L54 8 L59 15 L50 19 L42 16 L35 20 L26 17 L18 19Z" fill="#e6e6e4" />
      <path d="M20 11 L25 15 L30 10 M38 9 L36 16 L44 12 M50 11 L47 16" stroke="#55585a" strokeWidth="1.600" fill="none" /><circle cx="29" cy="14" r="1.800" fill="#3fa7c9" /><circle cx="41" cy="14" r="1.800" fill="#b8683a" />
      <ellipse cx="35" cy="14.500" rx="25" ry="4" fill="none" stroke="#b5b8ba" strokeWidth="1.200" />
    </>
  ),
};

const dockLayout = [
  ["finder", 1], ["launchpad", 0], ["mail", 1], ["slack", 1], ["calendar", 0], ["notes", 0], ["todo", 1], ["itunes", 1],
  ["ytmusic", 0], ["vlc", 0], ["postman", 1], ["vscode", 1], ["hyper", 1], ["twitter", 0], ["appstore", 0], ["settings", 0],
  null, ["mongo", 1], ["intellij", 1], ["brave", 1], ["safari", 1], ["terminal", 1], null, ["documents", 0], ["trash", 0],
];

const tasks = [
  { label: "Back to Dashboard", icon: <UpArrow />, visited: true, ls: 0.22 },
  { label: "Status", icon: <Magnify />, visited: true, bold: true, ls: 0.8 },
  { label: "Changes", icon: <Notepad size={48} />, ls: 0.15 },
  { label: "Workspace", icon: <SmallFolder />, ls: -0.1 },
  { label: "Build Now", icon: <ClockPlay />, ls: 0.1 },
  { label: "Delete Project", icon: <NoEntry />, ls: 0.22 },
  { label: "Configure", icon: <Gear />, visited: true, ls: 0.05 },
  { label: "GitHub Hook Log", icon: <Clipboard />, ls: 0.2 },
  { label: "GitHub", icon: <Octocat />, ls: 0.4 },
  { label: "Rename", icon: <Notepad size={48} />, ls: 0.3 },
];
const permalinks = [
  ["Last build (#2), 1 min 17 sec ago", 0.28],
  ["Last stable build (#2), 1 min 17 sec ago", 0.26],
  ["Last successful build (#2), 1 min 17 sec ago", 0.2],
  ["Last completed build (#2), 1 min 17 sec ago", 0.25],
];

export default function App() {
  return (
    <Desktop>
      <GlobalStyle />
      <MenuBar>
        <MenuIcon $w={71}><FaApple size={35} /></MenuIcon>
        <MenuText $w={118} $weight={700} $ls={0.9}>Safari</MenuText>
        <MenuText $w={82} $ls={0.49}>File</MenuText>
        <MenuText $w={86} $ls={0.41}>Edit</MenuText>
        <MenuText $w={101} $ls={-0.45}>View</MenuText>
        <MenuText $w={129} $ls={-0.09}>History</MenuText>
        <MenuText $w={180} $ls={-0.09}>Bookmarks</MenuText>
        <MenuText $w={140} $ls={-0.53}>Window</MenuText>
        <MenuText $w={70} $ls={0.41}>Help</MenuText>
        <Push />
        <MenuIcon $w={47}><Bluetooth /></MenuIcon>
        <MenuIcon $w={67}><Wifi /></MenuIcon>
        <MenuIcon $w={64}><Flag /></MenuIcon>
        <MenuIcon $w={62}><Speaker /></MenuIcon>
        <MenuText $w={70} $size={24} $ls={-0.7}>100%</MenuText>
        <MenuIcon $w={79}><Battery /></MenuIcon>
        <MenuText $w={151} $ls={0.24}>Sat 23:27</MenuText>
        <MenuText $w={264} $ls={0.25}>Ireoluwa Olaniyan</MenuText>
        <MenuIcon $w={63}><Lens size={30} w={2.6} color="#fff" /></MenuIcon>
        <MenuIcon $w={57}><Siri /></MenuIcon>
        <MenuIcon $w={38}><ListIcon /></MenuIcon>
      </MenuBar>

      <Window>
        <Toolbar>
          <Light $color="#ed6a5e" /><Light $color="#e1c04c" /><Light $color="#72be47" />
          <ToolButton $w={50} $ml={10}><Chevron /></ToolButton>
          <ToolButton $w={50} $ml={2}><Chevron flip /></ToolButton>
          <ToolButton $w={74} $ml={20}><SidebarIcon /></ToolButton>
          <Address $ls={-0.77}><Lock /><span>5bbe07f0a90b.ngrok.io</span><Reload /></Address>
          <Push />
          <ToolButton $w={74}><Share /></ToolButton>
          <ToolButton $w={74} $ml={16}><TabsIcon /></ToolButton>
        </Toolbar>
        <Tabs>
          <Tab $w={1440} $ls={0.42}>eCommerceApplicationDemo [Jenkins]</Tab>
          <Tab $w={1392} $on $ls={0.42}>eCommerceApplicationDemo [Jenkins]</Tab>
          <NewTab><Plus /></NewTab>
        </Tabs>

        <Header>
          <Butler />
          <Brand $ls={0.5}>Jenkins</Brand>
          <Push />
          <SearchBox $ls={0.2}><Lens size={36} w={3.6} color="#333" /><span>search</span><Help /></SearchBox>
          <HeaderLink $w={145} $ml={48} $gap={15} $ls={0.8}><Person />admin</HeaderLink>
          <HeaderLink $w={163} $ml={57} $gap={9} $ls={0.3}><Logout />log out</HeaderLink>
        </Header>
        <Crumbs>
          <Crumb $w={169} $ls={0.25}>Jenkins</Crumb><CrumbArrow />
          <Crumb $w={502} $ls={0.36}>eCommerceApplicationDemo</Crumb><CrumbArrow />
        </Crumbs>

        <Body>
          <Aside>
            {tasks.map((t) => (
              <Task key={t.label} $visited={t.visited} $bold={t.bold} $ls={t.ls}>{t.icon}<span>{t.label}</span></Task>
            ))}
            <Panel>
              <PanelHead>
                <Sun /><PanelTitle $ls={0.52}>Build History</PanelTitle>
                <Link $ls={0.7}>trend</Link><Collapse />
              </PanelHead>
              <Find>find<i>x</i></Find>
              <Build $alt><Ball /><BuildNo $ls={0.8}>#2</BuildNo><BuildDate $ls={0.52}>1 Aug 2020, 23:25</BuildDate></Build>
              <Build><Ball /><BuildNo $ls={0.8}>#1</BuildNo><BuildDate $ls={0.52}>1 Aug 2020, 23:24</BuildDate></Build>
              <Strip />
              <PanelFoot><Rss /><Link $ls={0.14}>Atom feed for all</Link><Rss /><Link $ls={0.12}>Atom feed for failures</Link></PanelFoot>
            </Panel>
          </Aside>
          <Main>
            <Title $ls={-0.2}>Project eCommerceApplicationDemo</Title>
            <Actions>
              <Describe><NoteEdit /><Link $ls={0.12}>add description</Link></Describe>
              <Button $ls={0.75}>Disable Project</Button>
            </Actions>
            <Shortcuts>
              <Shortcut><Folder size={96} /><Link $ls={-0.1}>Workspace</Link></Shortcut>
              <Shortcut><Notepad size={96} /><Link $ls={0.12}>Recent Changes</Link></Shortcut>
            </Shortcuts>
            <SubTitle $ls={-0.25}>Permalinks</SubTitle>
            <Permalinks>
              {permalinks.map(([t, ls]) => <Permalink key={t}><Link $ls={ls}>{t}</Link></Permalink>)}
            </Permalinks>
          </Main>
        </Body>

        <Footer>
          <Generated><GenLine $weight={600} $ls={1}>Page generated:</GenLine><GenLine $weight={400} $ls={0.53}>1 Aug 2020, 23:26:47 WAT</GenLine></Generated>
          <FootItem $w={167} $pl={0} $ls={0.7}>REST API</FootItem>
          <FootItem $w={295} $pl={40} $white $ls={0.54}>Jenkins 2.235.3</FootItem>
        </Footer>
      </Window>

      <DockBar>
        {dockLayout.map((d, i) => d ? (
          <DockItem key={i} $running={!!d[1]}><svg width="70" height="76" viewBox="0 0 70 76">{dock[d[0]]}</svg></DockItem>
        ) : <DockSplit key={i} />)}
      </DockBar>
    </Desktop>
  );
}
